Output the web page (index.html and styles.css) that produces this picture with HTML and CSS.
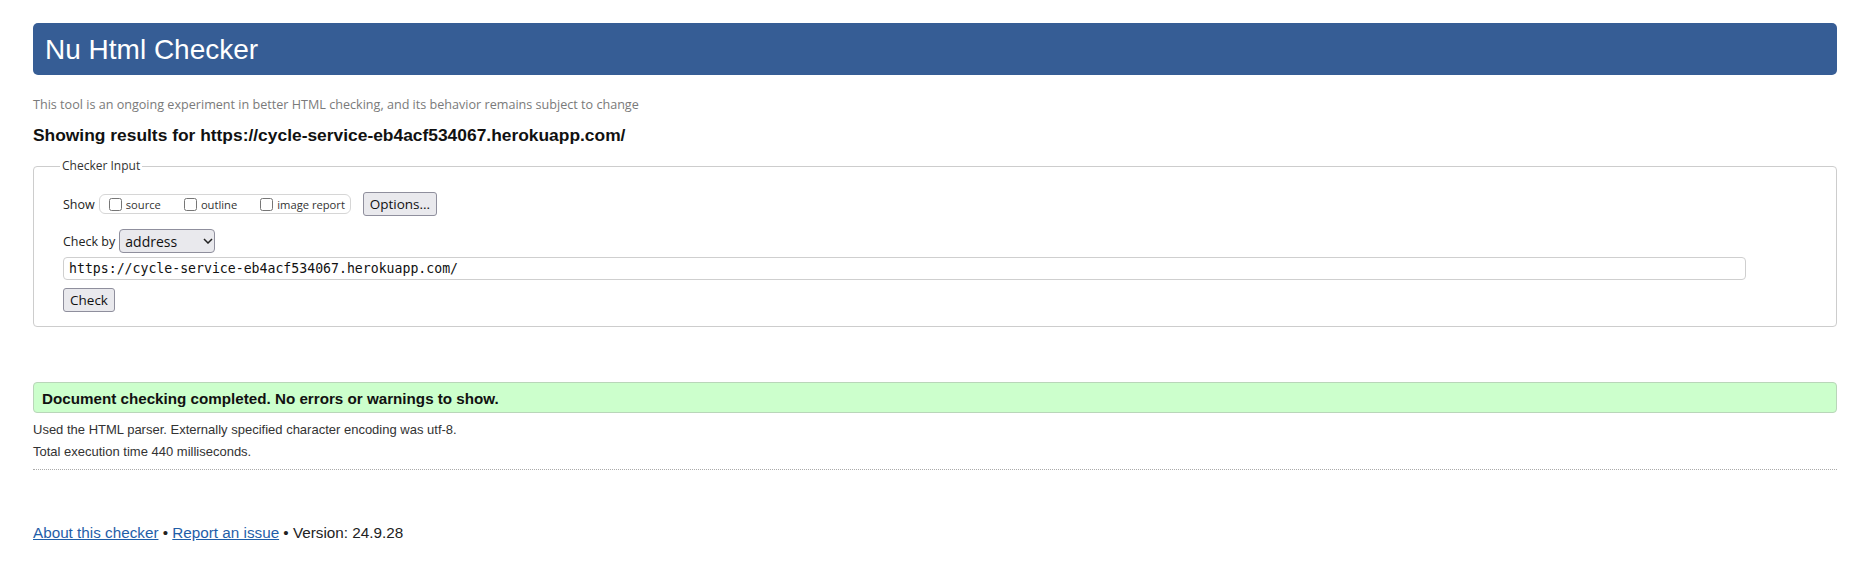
FILE: index.html
```html
<!DOCTYPE html>
<html lang="en">
<head>
<meta charset="utf-8">
<title>Showing results for https://cycle-service-eb4acf534067.herokuapp.com/ - Nu Html Checker</title>
<link rel="stylesheet" href="styles.css">
</head>
<body>
<h1 class="title">Nu Html Checker</h1>
<p class="about">This tool is an ongoing experiment in better HTML checking, and its behavior remains subject to change</p>
<h2 class="results-for">Showing results for https://cycle-service-eb4acf534067.herokuapp.com/</h2>

<form class="checker">
  <fieldset class="checker-input">
    <legend class="legend">Checker Input</legend>
    <div class="row show-row">
      <span class="label">Show</span>
      <span class="show-box">
        <label class="opt"><input type="checkbox" class="cb"><span>source</span></label>
        <label class="opt"><input type="checkbox" class="cb"><span>outline</span></label>
        <label class="opt"><input type="checkbox" class="cb"><span>image report</span></label>
      </span>
      <button type="button" class="btn btn-options">Options...</button>
    </div>
    <div class="row by-row">
      <span class="label">Check by</span>
      <span class="select">
        <select class="select-native"><option>address</option></select>
        <svg class="chev" width="10" height="6" viewBox="0 0 10 6"><path d="M1 1 L5 5 L9 1" fill="none" stroke="#222" stroke-width="1.5"/></svg>
      </span>
    </div>
    <div class="url-row">
      <input class="url" type="text" value="https://cycle-service-eb4acf534067.herokuapp.com/">
    </div>
    <div class="submit-row">
      <button type="button" class="btn btn-check">Check</button>
    </div>
  </fieldset>
</form>

<div class="success">Document checking completed. No errors or warnings to show.</div>
<p class="details">Used the HTML parser. Externally specified character encoding was utf-8.</p>
<p class="details">Total execution time 440 milliseconds.</p>
<hr class="sep">
<p class="footer"><a href="#">About this checker</a> • <a href="#">Report an issue</a> • Version: 24.9.28</p>
</body>
</html>
```
FILE: styles.css
```css
html, body {
  background: #fff;
}
body {
  margin: 0;
  padding: 0 34px 0 33px;
  font-family: "Liberation Sans", Arial, sans-serif;
  color: #222;
}
.title {
  margin: 23px 0 0;
  height: 51px;
  padding: 1px 12px 0;
  line-height: 51px;
  background: #365d95;
  color: #fff;
  font-size: 28px;
  font-weight: normal;
  border-radius: 5px;
}
.about {
  margin: 21px 0 0;
  font-family: "Open Sans", "Noto Sans", sans-serif;
  font-size: 12.6px;
  line-height: 17px;
  color: #7a7a7a;
}
.results-for {
  margin: 13px 0 0;
  font-size: 17.4px;
  line-height: 19px;
  font-weight: bold;
  color: #111;
}
.checker {
  margin: 0;
}
.checker-input {
  margin: 14px 0 0;
  padding: 18px 29px 14px 29px;
  border: 1px solid #cdcdcd;
  border-radius: 4px;
  font-family: "Open Sans", "Noto Sans", sans-serif;
  color: #222;
}
.legend {
  margin-left: -3px;
  padding: 0 2px 1px;
  font-size: 12px;
  line-height: 14px;
  color: #333;
}
.row {
  display: flex;
  align-items: center;
}
.show-row {
  height: 24px;
}
.label {
  font-size: 12.5px;
  color: #222;
}
.show-box {
  display: flex;
  align-items: center;
  height: 18px;
  margin-left: 4px;
  padding: 0 5px 0 9px;
  border: 1px solid #d6d6d6;
  border-radius: 6px;
}
.opt {
  display: flex;
  align-items: center;
  font-size: 11.2px;
  color: #333;
}
.opt + .opt {
  margin-left: 23px;
}
.cb {
  width: 13px;
  height: 13px;
  margin: 0 4px 0 0;
}
.btn {
  font-family: "Open Sans", "Noto Sans", sans-serif;
  font-size: 13.5px;
  color: #111;
  background: #e9e9ed;
  border: 1px solid #8f8f9d;
  border-radius: 3px;
  padding: 0 5px;
  line-height: 20px;
  height: 24px;
}
.btn-options {
  margin-left: 12px;
  width: 74px;
}
.by-row {
  margin-top: 13px;
  height: 24px;
}
.select {
  display: flex;
  align-items: center;
  width: 94px;
  height: 22px;
  margin-left: 4px;
  background: #e9e9ed;
  border: 1px solid #8f8f9d;
  border-radius: 4px;
}
.select-native {
  appearance: none;
  -webkit-appearance: none;
  border: 0;
  background: transparent;
  font-family: "Open Sans", "Noto Sans", sans-serif;
  font-size: 14px;
  color: #111;
  padding: 0 0 0 5px;
  margin: 0;
  width: 75px;
  outline: none;
}
.chev {
  margin-left: 8px;
}
.url-row {
  margin-top: 3px;
}
.url {
  box-sizing: border-box;
  width: 1683px;
  height: 23px;
  margin: 0;
  padding: 0 5px;
  border: 1px solid #cfcfcf;
  border-radius: 4px;
  font-family: "DejaVu Sans Mono", "Liberation Mono", monospace;
  font-size: 13.2px;
  color: #111;
  background: #fff;
}
.submit-row {
  margin-top: 8px;
  display: flex;
}
.btn-check {
  width: 52px;
  padding: 0;
}
.success {
  margin-top: 55px;
  padding: 7px 8px 5px;
  line-height: 17px;
  font-size: 15.2px;
  font-weight: bold;
  color: #111;
  background: #ccffcc;
  border: 1px solid #b9d6b9;
  border-radius: 4px;
}
.details {
  margin: 0;
  font-size: 13px;
  line-height: 22px;
  color: #333;
}
.success + .details {
  margin-top: 6px;
}
.sep {
  margin: 6px 0 0;
  border: 0;
  border-top: 1px dotted #aaa;
  height: 0;
}
.footer {
  margin: 54px 0 0;
  font-size: 15.25px;
  line-height: 18px;
  color: #222;
}
.footer a {
  color: #1f5ea8;
}
```
